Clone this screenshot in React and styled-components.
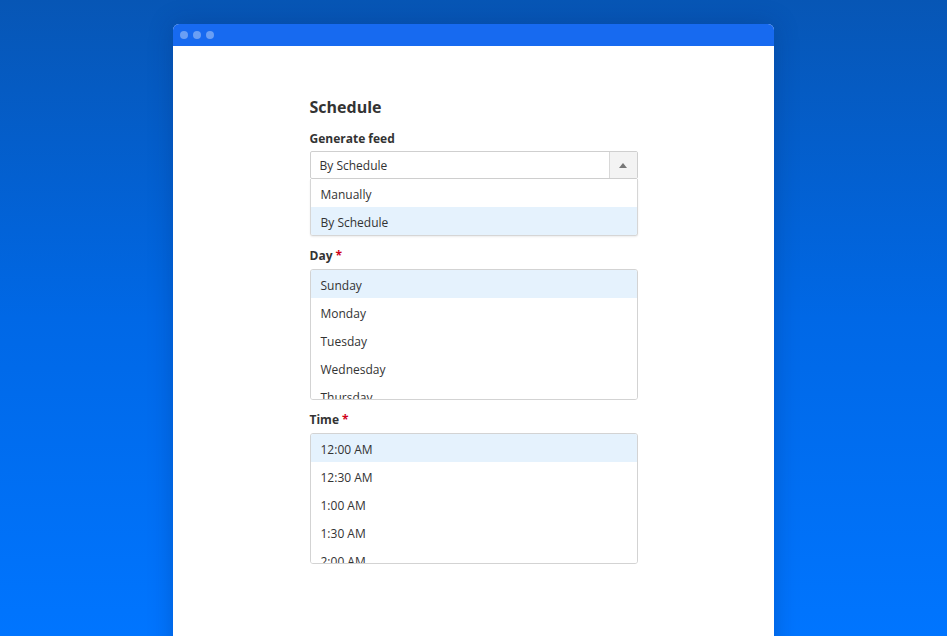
import React from 'react';
import { styled, createGlobalStyle } from 'styled-components';

const Global = createGlobalStyle`
  html, body {
    margin: 0;
    height: 100%;
  }
  body {
    font-family: "Open Sans", "Noto Sans", sans-serif;
    color: #333;
  }
  #root {
    height: 100%;
  }
`;

const Page = styled.div`
  height: 636px;
  overflow: hidden;
  background: linear-gradient(180deg, #0756b5 0%, #0068e6 50%, #0075ff 100%);
  display: flex;
  justify-content: center;
  padding-top: 24px;
  box-sizing: border-box;
`;

const Window = styled.div`
  width: 601px;
  height: 640px;
  background: #fff;
  border-radius: 6px 6px 0 0;
  box-shadow: 0 0 24px rgba(0, 30, 90, 0.25);
  display: flex;
  flex-direction: column;
  overflow: hidden;
`;

const TitleBar = styled.div`
  height: 22px;
  background: #176af0;
  display: flex;
  align-items: center;
  gap: 5px;
  padding-left: 7px;
`;

const Dot = styled.span`
  width: 8px;
  height: 8px;
  border-radius: 50%;
  background: #6a9ff4;
`;

const Content = styled.div`
  width: 328px;
  margin: 0 auto;
  padding-top: 48px;
  display: flex;
  flex-direction: column;
`;

const Heading = styled.h2`
  margin: 0 0 11px;
  font-size: 16px;
  font-weight: 700;
  line-height: 26px;
  color: #333;
`;

const Label = styled.div`
  font-size: 12px;
  font-weight: 700;
  line-height: 16px;
  margin-bottom: ${(p) => p.$space || 4}px;
  color: #333;
`;

const Required = styled.span`
  color: #d0021b;
  margin-left: 3px;
`;

const Field = styled.div`
  margin-bottom: ${(p) => p.$gap || 12}px;
`;

const Select = styled.div`
  height: 28px;
  border: 1px solid #cfcfcf;
  border-radius: 2px;
  box-sizing: border-box;
  display: flex;
  align-items: stretch;
`;

const SelectValue = styled.div`
  flex: 1;
  font-size: 12px;
  line-height: 25px;
  padding: 1px 0 0 9px;
  box-sizing: border-box;
`;

const Arrow = styled.div`
  width: 27px;
  background: #f3f3f3;
  border-left: 1px solid #d8d8d8;
  display: flex;
  align-items: center;
  justify-content: center;
`;

const Menu = styled.div`
  border: 1px solid #d6d6d6;
  border-top: none;
  border-radius: 0 0 3px 3px;
  box-shadow: 0 1px 2px rgba(0, 0, 0, 0.08);
  overflow: hidden;
`;

const ListBox = styled.div`
  height: 131px;
  border: 1px solid #d3d3d3;
  border-radius: 3px;
  box-sizing: border-box;
  overflow: hidden;
`;

const Option = styled.div`
  height: 28px;
  box-sizing: border-box;
  padding: 3px 0 0 10px;
  line-height: 25px;
  font-size: 12px;
  color: #333;
  background: ${(p) => (p.$active ? '#e5f2fd' : '#fff')};
`;

// only the rows the scroll window shows
const days = ['Sunday', 'Monday', 'Tuesday', 'Wednesday', 'Thursday'];
const times = ['12:00 AM', '12:30 AM', '1:00 AM', '1:30 AM', '2:00 AM'];

const App = () => {
  return (
    <Page>
      <Global />
      <Window>
        <TitleBar>
          <Dot />
          <Dot />
          <Dot />
        </TitleBar>
        <Content>
          <Heading>Schedule</Heading>
          <Field $gap={12}>
            <Label>Generate feed</Label>
            <Select>
              <SelectValue>By Schedule</SelectValue>
              <Arrow>
                <svg width="8" height="5" viewBox="0 0 8 5">
                  <path d="M0 5 L4 0 L8 5 Z" fill="#777" />
                </svg>
              </Arrow>
            </Select>
            <Menu>
              <Option>Manually</Option>
              <Option $active>By Schedule</Option>
            </Menu>
          </Field>
          <Field $gap={12}>
            <Label $space={5}>
              Day<Required>*</Required>
            </Label>
            <ListBox>
              {days.map((d, i) => (
                <Option key={d} $active={i === 0}>
                  {d}
                </Option>
              ))}
            </ListBox>
          </Field>
          <Field>
            <Label $space={5}>
              Time<Required>*</Required>
            </Label>
            <ListBox>
              {times.map((t, i) => (
                <Option key={t} $active={i === 0}>
                  {t}
                </Option>
              ))}
            </ListBox>
          </Field>
        </Content>
      </Window>
    </Page>
  );
};

export default App;
